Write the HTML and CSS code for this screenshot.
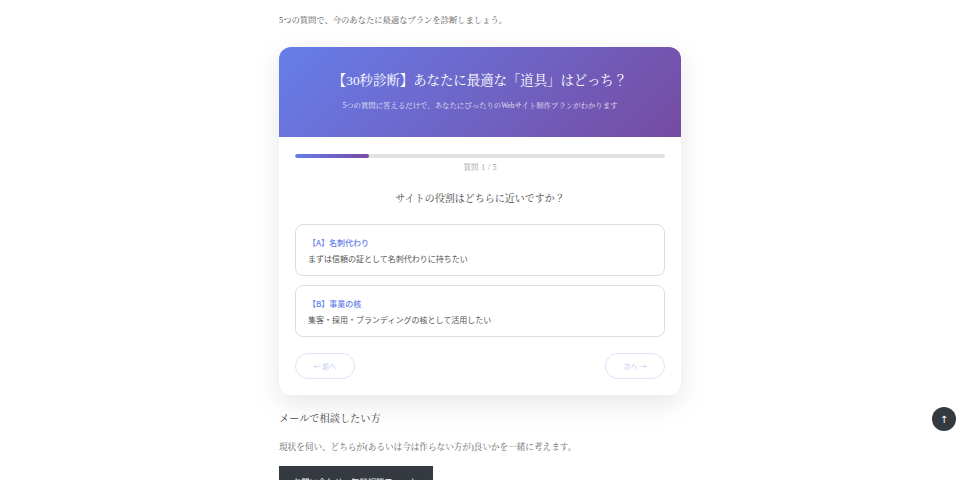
FILE: index.html
```html
<!DOCTYPE html>
<html lang="ja">
<head>
<meta charset="utf-8">
<title>診断</title>
<link rel="stylesheet" href="styles.css">
</head>
<body>
<main class="page">
  <p class="intro">5つの質問で、今のあなたに最適なプランを診断しましょう。</p>
  <section class="card">
    <header class="card-head">
      <h2 class="card-title">【30秒診断】あなたに最適な「道具」はどっち？</h2>
      <p class="card-sub">5つの質問に答えるだけで、あなたにぴったりのWebサイト制作プランがわかります</p>
    </header>
    <div class="card-body">
      <div class="progress"><div class="progress-fill" style="width:20%"></div></div>
      <p class="step">質問 1 / 5</p>
      <h3 class="question">サイトの役割はどちらに近いですか？</h3>
      <div class="options">
        <button class="option">
          <span class="opt-label">【A】名刺代わり</span>
          <span class="opt-text">まずは信頼の証として名刺代わりに持ちたい</span>
        </button>
        <button class="option">
          <span class="opt-label">【B】事業の核</span>
          <span class="opt-text">集客・採用・ブランディングの核として活用したい</span>
        </button>
      </div>
      <div class="nav">
        <button class="nav-btn">← 前へ</button>
        <button class="nav-btn">次へ →</button>
      </div>
    </div>
  </section>
  <h3 class="mail-title">メールで相談したい方</h3>
  <p class="mail-text">現状を伺い、どちらが(あるいは今は作らない方が)良いかを一緒に考えます。</p>
  <a class="cta" href="#">お問い合わせ・無料相談フォーム →</a>
</main>
<a class="to-top" href="#">↑</a>
</body>
</html>
```

FILE: styles.css
```css
html, body {
  margin: 0;
  padding: 0;
  background: #ffffff;
}
body {
  font-family: "Liberation Serif", "Noto Serif CJK JP", "Noto Serif JP", "IPAMincho", "IPAexMincho", "TakaoMincho", serif;
  color: #444;
  overflow: hidden;
  height: 480px;
}
.page {
  width: 402px;
  margin: 0 auto;
  padding-top: 15px;
}
.intro {
  margin: 0;
  font-size: 8.3px;
  line-height: 12px;
  color: #555;
}
.card {
  margin-top: 20px;
  background: #fff;
  border-radius: 12px;
  box-shadow: 0 8px 28px rgba(0, 0, 0, 0.10);
  overflow: hidden;
}
.card-head {
  height: 90px;
  box-sizing: border-box;
  padding-top: 24px;
  text-align: center;
  color: #fff;
  background: linear-gradient(135deg, #667eea 0%, #764ba2 100%);
}
.card-title {
  margin: 0;
  font-size: 13.4px;
  font-weight: normal;
  line-height: 20px;
}
.card-sub {
  margin: 9px 0 0;
  font-size: 7.4px;
  line-height: 12px;
  color: rgba(255, 255, 255, 0.85);
}
.card-body {
  padding: 17px 16px 16px;
}
.progress {
  height: 4px;
  background: #e2e2e2;
  border-radius: 2px;
  overflow: hidden;
}
.progress-fill {
  height: 100%;
  background: linear-gradient(90deg, #667eea, #764ba2);
  border-radius: 2px;
}
.step {
  margin: 4px 0 0;
  text-align: center;
  font-size: 7.5px;
  line-height: 12px;
  word-spacing: 1px;
  color: #999;
}
.question {
  margin: 18px 0 0;
  text-align: center;
  font-size: 10px;
  font-weight: normal;
  line-height: 14px;
  color: #444;
}
.options {
  margin-top: 18px;
  display: flex;
  flex-direction: column;
  gap: 9px;
}
.option {
  display: flex;
  flex-direction: column;
  align-items: flex-start;
  gap: 4px;
  height: 52px;
  box-sizing: border-box;
  padding: 12px 12px;
  background: #fff;
  border: 1px solid #dedede;
  border-radius: 8px;
  font-family: "Noto Sans CJK JP", sans-serif;
  text-align: left;
  cursor: pointer;
}
.opt-label {
  font-size: 8px;
  line-height: 12px;
  font-weight: 500;
  color: #667eea;
}
.opt-text {
  font-size: 8px;
  line-height: 12px;
  color: #555;
}
.nav {
  margin-top: 16px;
  display: flex;
  justify-content: space-between;
}
.nav-btn {
  width: 60px;
  height: 26px;
  box-sizing: border-box;
  border: 1px solid #dfe3fb;
  border-radius: 13px;
  background: #fff;
  font-family: "Noto Sans CJK JP", sans-serif;
  font-size: 7px;
  color: #c5cbf3;
  padding: 0;
}
.mail-title {
  margin: 17px 0 0;
  font-size: 10.2px;
  font-weight: normal;
  line-height: 14px;
  color: #444;
}
.mail-text {
  margin: 14px 0 0;
  font-size: 8.6px;
  line-height: 14px;
  color: #666;
}
.cta {
  display: inline-block;
  margin-top: 12px;
  width: 154px;
  height: 30px;
  box-sizing: border-box;
  padding: 9px 14px;
  background: #343a40;
  color: #fff;
  text-decoration: none;
  font-family: "Noto Sans CJK JP", sans-serif;
  font-size: 8.3px;
  line-height: 12px;
  white-space: nowrap;
  overflow: hidden;
}
.to-top {
  position: fixed;
  left: 932px;
  top: 407px;
  width: 24px;
  height: 24px;
  border-radius: 50%;
  background: #343a40;
  color: #fff;
  text-decoration: none;
  display: flex;
  align-items: center;
  justify-content: center;
  font-family: "DejaVu Sans", sans-serif;
  font-size: 10px;
}
```
